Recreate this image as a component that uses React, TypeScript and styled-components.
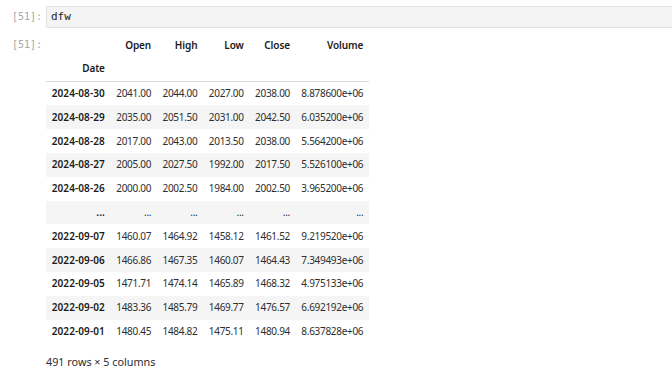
import React from 'react';
import styled, { createGlobalStyle } from 'styled-components';

const GlobalStyle = createGlobalStyle`
  html, body {
    margin: 0;
    padding: 0;
    background: #ffffff;
    overflow: hidden;
  }
`;

const Notebook = styled.div`
  display: flex;
  flex-direction: column;
  gap: 5px;
  padding-top: 6px;
  width: 672px;
  height: 372px;
  font-family: 'Noto Sans', 'Open Sans', sans-serif;
`;

const CellRow = styled.div`
  display: flex;
  align-items: flex-start;
`;

const Prompt = styled.div<{ $top?: number }>`
  flex: 0 0 46px;
  box-sizing: border-box;
  padding-right: 4px;
  padding-top: ${(p) => p.$top ?? 0}px;
  text-align: right;
  font-family: 'DejaVu Sans Mono', 'Liberation Mono', monospace;
  font-size: 10px;
  line-height: 22px;
  color: #a8a8a8;
`;

const InputBox = styled.div`
  flex: 1;
  height: 22px;
  box-sizing: border-box;
  background: #f4f4f4;
  border: 1px solid #e2e2e2;
  border-right: none;
  padding-left: 4px;
  font-family: 'DejaVu Sans Mono', 'Liberation Mono', monospace;
  font-size: 11px;
  line-height: 20px;
  color: #1e1e1e;
`;

const Output = styled.div`
  display: flex;
  flex-direction: column;
`;

const Table = styled.table`
  border-collapse: collapse;
  border-spacing: 0;
  font-size: 10px;
  letter-spacing: -0.3px;
  color: #2e2e2e;
`;

const HeadCell = styled.th`
  padding: 5.5px 5.7px;
  line-height: 12.8px;
  height: 12.8px;
  text-align: right;
  font-weight: 600;
  letter-spacing: -0.1px;
  color: #1a1a1a;
`;

const Head = styled.thead`
  border-bottom: 1px solid #dadada;
`;

const Row = styled.tr`
  &:nth-child(even) {
    background: #f5f5f5;
  }
`;

const IndexCell = styled.th`
  padding: 5.5px 5.7px;
  line-height: 12.8px;
  text-align: right;
  font-weight: 600;
  letter-spacing: 0.1px;
  color: #1a1a1a;
  white-space: nowrap;
`;

const Cell = styled.td`
  padding: 5.5px 5.7px;
  line-height: 12.8px;
  text-align: right;
  white-space: nowrap;
`;

const Shape = styled.p`
  margin: 11px 0 0 0;
  font-size: 10.8px;
  line-height: 16px;
  color: #2e2e2e;
`;

const columns = ['Open', 'High', 'Low', 'Close', 'Volume'];

const rows: string[][] = [
  ['2024-08-30', '2041.00', '2044.00', '2027.00', '2038.00', '8.878600e+06'],
  ['2024-08-29', '2035.00', '2051.50', '2031.00', '2042.50', '6.035200e+06'],
  ['2024-08-28', '2017.00', '2043.00', '2013.50', '2038.00', '5.564200e+06'],
  ['2024-08-27', '2005.00', '2027.50', '1992.00', '2017.50', '5.526100e+06'],
  ['2024-08-26', '2000.00', '2002.50', '1984.00', '2002.50', '3.965200e+06'],
  ['...', '...', '...', '...', '...', '...'],
  ['2022-09-07', '1460.07', '1464.92', '1458.12', '1461.52', '9.219520e+06'],
  ['2022-09-06', '1466.86', '1467.35', '1460.07', '1464.43', '7.349493e+06'],
  ['2022-09-05', '1471.71', '1474.14', '1465.89', '1468.32', '4.975133e+06'],
  ['2022-09-02', '1483.36', '1485.79', '1469.77', '1476.57', '6.692192e+06'],
  ['2022-09-01', '1480.45', '1484.82', '1475.11', '1480.94', '8.637828e+06'],
];

export default function App() {
  return (
    <>
      <GlobalStyle />
      <Notebook>
        <CellRow>
          <Prompt>[51]:</Prompt>
          <InputBox>dfw</InputBox>
        </CellRow>
        <CellRow>
          <Prompt $top={1}>[51]:</Prompt>
          <Output>
            <Table>
              <Head>
                <tr>
                  <HeadCell />
                  {columns.map((c) => (
                    <HeadCell key={c}>{c}</HeadCell>
                  ))}
                </tr>
                <tr>
                  <HeadCell>Date</HeadCell>
                  {columns.map((c) => (
                    <HeadCell key={c} />
                  ))}
                </tr>
              </Head>
              <tbody>
                {rows.map((r, i) => (
                  <Row key={i}>
                    <IndexCell>{r[0]}</IndexCell>
                    {r.slice(1).map((v, j) => (
                      <Cell key={j}>{v}</Cell>
                    ))}
                  </Row>
                ))}
              </tbody>
            </Table>
            <Shape>491 rows × 5 columns</Shape>
          </Output>
        </CellRow>
      </Notebook>
    </>
  );
}
